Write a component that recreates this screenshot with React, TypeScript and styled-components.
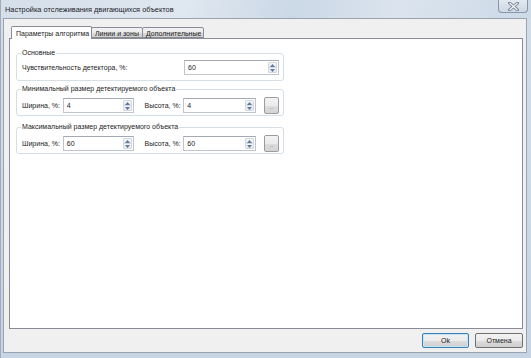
import { FC } from "react";
import styled, { createGlobalStyle } from "styled-components";

const GlobalStyle = createGlobalStyle`
  html, body {
    margin: 0;
    padding: 0;
    background: #ffffff;
  }
  * {
    box-sizing: border-box;
  }
`;

interface SpinValue {
  value: string;
  width: number;
}

const SpinInput: FC<SpinValue> = ({ value, width }) => {
  return (
    <SpinBox $width={width}>
      <SpinText>{value}</SpinText>
      <SpinButtons>
        <SpinHalf>
          <svg width="5" height="3" viewBox="0 0 5 3">
            <path d="M0 3 L2.5 0 L5 3 Z" fill="#5a7aa6" />
          </svg>
        </SpinHalf>
        <SpinHalf>
          <svg width="5" height="3" viewBox="0 0 5 3">
            <path d="M0 0 L2.5 3 L5 0 Z" fill="#5a7aa6" />
          </svg>
        </SpinHalf>
      </SpinButtons>
    </SpinBox>
  );
};

interface SizeRowValue {
  width: string;
  height: string;
}

const SizeRow: FC<SizeRowValue> = ({ width, height }) => {
  return (
    <Row>
      <Label $width={41}>Ширина, %:</Label>
      <SpinInput value={width} width={71} />
      <Label $width={39} $left={11}>
        Высота, %:
      </Label>
      <SpinInput value={height} width={73} />
      <DotsButton>..</DotsButton>
    </Row>
  );
};

const App: FC = () => {
  return (
    <>
      <GlobalStyle />
      <Window>
        <TitleBar>
          <Title>Настройка отслеживания двигающихся объектов</Title>
          <CloseButton>
            <svg width="11" height="9" viewBox="0 0 11 9">
              <path
                d="M1.5 1 L9.5 8 M9.5 1 L1.5 8"
                stroke="#7c8795"
                strokeWidth="3"
                strokeLinecap="square"
              />
              <path
                d="M1.5 1 L9.5 8 M9.5 1 L1.5 8"
                stroke="#f4f6f9"
                strokeWidth="1.2"
              />
            </svg>
          </CloseButton>
        </TitleBar>
        <Client>
          <TabStrip>
            <Tab $active $width={81}>
              Параметры алгоритма
            </Tab>
            <Tab $width={52}>Линии и зоны</Tab>
            <Tab $width={62}>Дополнительные</Tab>
          </TabStrip>
          <Panel>
            <Group>
              <Legend>Основные</Legend>
              <Row $first>
                <Label>Чувствительность детектора, %:</Label>
                <SpinInput value="60" width={95} />
              </Row>
            </Group>
            <Group $gap={3}>
              <Legend>Минимальный размер детектируемого объекта</Legend>
              <SizeRow width="4" height="4" />
            </Group>
            <Group $gap={6}>
              <Legend>Максимальный размер детектируемого объекта</Legend>
              <SizeRow width="60" height="60" />
            </Group>
          </Panel>
          <Footer>
            <DialogButton $default>Ok</DialogButton>
            <DialogButton>Отмена</DialogButton>
          </Footer>
        </Client>
      </Window>
    </>
  );
};

export default App;

const Window = styled.div`
  width: 531px;
  height: 358px;
  display: flex;
  flex-direction: column;
  background: linear-gradient(180deg, #d2dde9 0%, #c6d4e3 100%);
  border-left: 1px solid #9eacbd;
  font-family: "Liberation Sans", Arial, sans-serif;
  font-size: 7px;
  color: #1b1b1b;
`;

const TitleBar = styled.div`
  height: 18px;
  display: flex;
  align-items: flex-start;
  justify-content: space-between;
  padding-left: 4px;
  background: linear-gradient(
    100deg,
    #d5dfea 0%,
    #dfe7f0 35%,
    #cbd8e6 55%,
    #dbe4ee 75%,
    #ccd9e7 100%
  );
`;

const Title = styled.div`
  padding-top: 5px;
  font-size: 7.4px;
  line-height: 10px;
  color: #1e2228;
`;

const CloseButton = styled.div`
  width: 30px;
  height: 13px;
  margin-right: 3px;
  display: flex;
  align-items: center;
  justify-content: center;
  border: 1px solid #8796a8;
  border-top: none;
  border-radius: 0 0 4px 4px;
  background: linear-gradient(180deg, #e2e9f1 0%, #cdd8e4 100%);
`;

const Client = styled.div`
  flex: 1;
  display: flex;
  flex-direction: column;
  margin: 0 4px 5px 2px;
  border: 1px solid #9aa3ad;
  background: #f0f0f0;
`;

const TabStrip = styled.div`
  height: 19px;
  display: flex;
  align-items: flex-end;
  padding-left: 7px;
`;

const Tab = styled.div<{ $active?: boolean; $width: number }>`
  position: relative;
  width: ${(p) => p.$width}px;
  height: ${(p) => (p.$active ? "13px" : "11px")};
  margin-bottom: ${(p) => (p.$active ? "-1px" : "0")};
  margin-left: ${(p) => (p.$active ? "0" : "-1px")};
  padding: ${(p) => (p.$active ? "2px 0 0 4px" : "1px 0 0 3px")};
  border: 1px solid #898c95;
  border-bottom: ${(p) => (p.$active ? "none" : "1px solid #898c95")};
  border-radius: 2px 2px 0 0;
  background: ${(p) =>
    p.$active
      ? "#ffffff"
      : "linear-gradient(180deg, #f2f2f2 0%, #ebebeb 50%, #dddddd 51%, #cfcfcf 100%)"};
  line-height: 9px;
  white-space: nowrap;
  z-index: ${(p) => (p.$active ? 1 : 0)};
`;

const Panel = styled.div`
  flex: 1;
  margin: 0 3px 0 5px;
  padding: 9px 6px 0 6px;
  border: 1px solid #898c95;
  background: #ffffff;
`;

const Group = styled.fieldset<{ $gap?: number }>`
  width: 268px;
  margin: ${(p) => p.$gap ?? 0}px 0 0 0;
  padding: 0 4px 1px 5px;
  border: 1px solid #d5dfe5;
  border-radius: 3px;
  min-inline-size: 0;
`;

const Legend = styled.legend`
  margin-left: -1px;
  padding: 0 1px;
  line-height: 10px;
  color: #1b1b1b;
`;

const Row = styled.div<{ $first?: boolean }>`
  display: flex;
  align-items: center;
  justify-content: ${(p) => (p.$first ? "space-between" : "flex-start")};
  height: 17px;
  margin: ${(p) => (p.$first ? "1px 0 3px 0" : "3px 0 0 0")};
`;

const Label = styled.div<{ $width?: number; $left?: number }>`
  width: ${(p) => (p.$width ? `${p.$width}px` : "auto")};
  margin-left: ${(p) => p.$left ?? 0}px;
  white-space: nowrap;
  line-height: 10px;
`;

const SpinBox = styled.div<{ $width: number }>`
  width: ${(p) => p.$width}px;
  height: 15px;
  display: flex;
  align-items: stretch;
  padding: 1px;
  border: 1px solid #c0c5cd;
  border-top-color: #a3a8b1;
  background: #ffffff;
`;

const SpinText = styled.div`
  flex: 1;
  padding-left: 2px;
  line-height: 11px;
  color: #1b1b1b;
`;

const SpinButtons = styled.div`
  width: 9px;
  display: flex;
  flex-direction: column;
  border: 1px solid #d4d8de;
  border-radius: 1px;
`;

const SpinHalf = styled.div`
  flex: 1;
  display: flex;
  align-items: center;
  justify-content: center;
  background: linear-gradient(180deg, #f6f7f8 0%, #e6e8ec 100%);
  & + & {
    border-top: 1px solid #d4d8de;
  }
`;

const DotsButton = styled.div`
  width: 15px;
  height: 17px;
  margin-left: 8px;
  display: flex;
  align-items: center;
  justify-content: center;
  padding-top: 3px;
  border: 1px solid #9a9b9c;
  border-radius: 2px;
  background: linear-gradient(180deg, #f3f3f3 0%, #ebebeb 50%, #dddddd 51%, #d4d4d4 100%);
  font-size: 6px;
  color: #555555;
`;

const Footer = styled.div`
  height: 23px;
  display: flex;
  justify-content: flex-end;
  align-items: center;
  gap: 6px;
  padding: 0 3px 0 0;
`;

const DialogButton = styled.div<{ $default?: boolean }>`
  width: ${(p) => (p.$default ? "47px" : "48px")};
  height: 15px;
  display: flex;
  align-items: center;
  justify-content: center;
  border: 1px solid ${(p) => (p.$default ? "#3c7fb1" : "#707070")};
  border-radius: 2px;
  background: linear-gradient(
    180deg,
    #f2f2f2 0%,
    #ebebeb 50%,
    #dddddd 51%,
    #cfcfcf 100%
  );
  box-shadow: ${(p) => (p.$default ? "inset 0 0 0 1px #c4e5f6" : "none")};
  line-height: 10px;
`;
